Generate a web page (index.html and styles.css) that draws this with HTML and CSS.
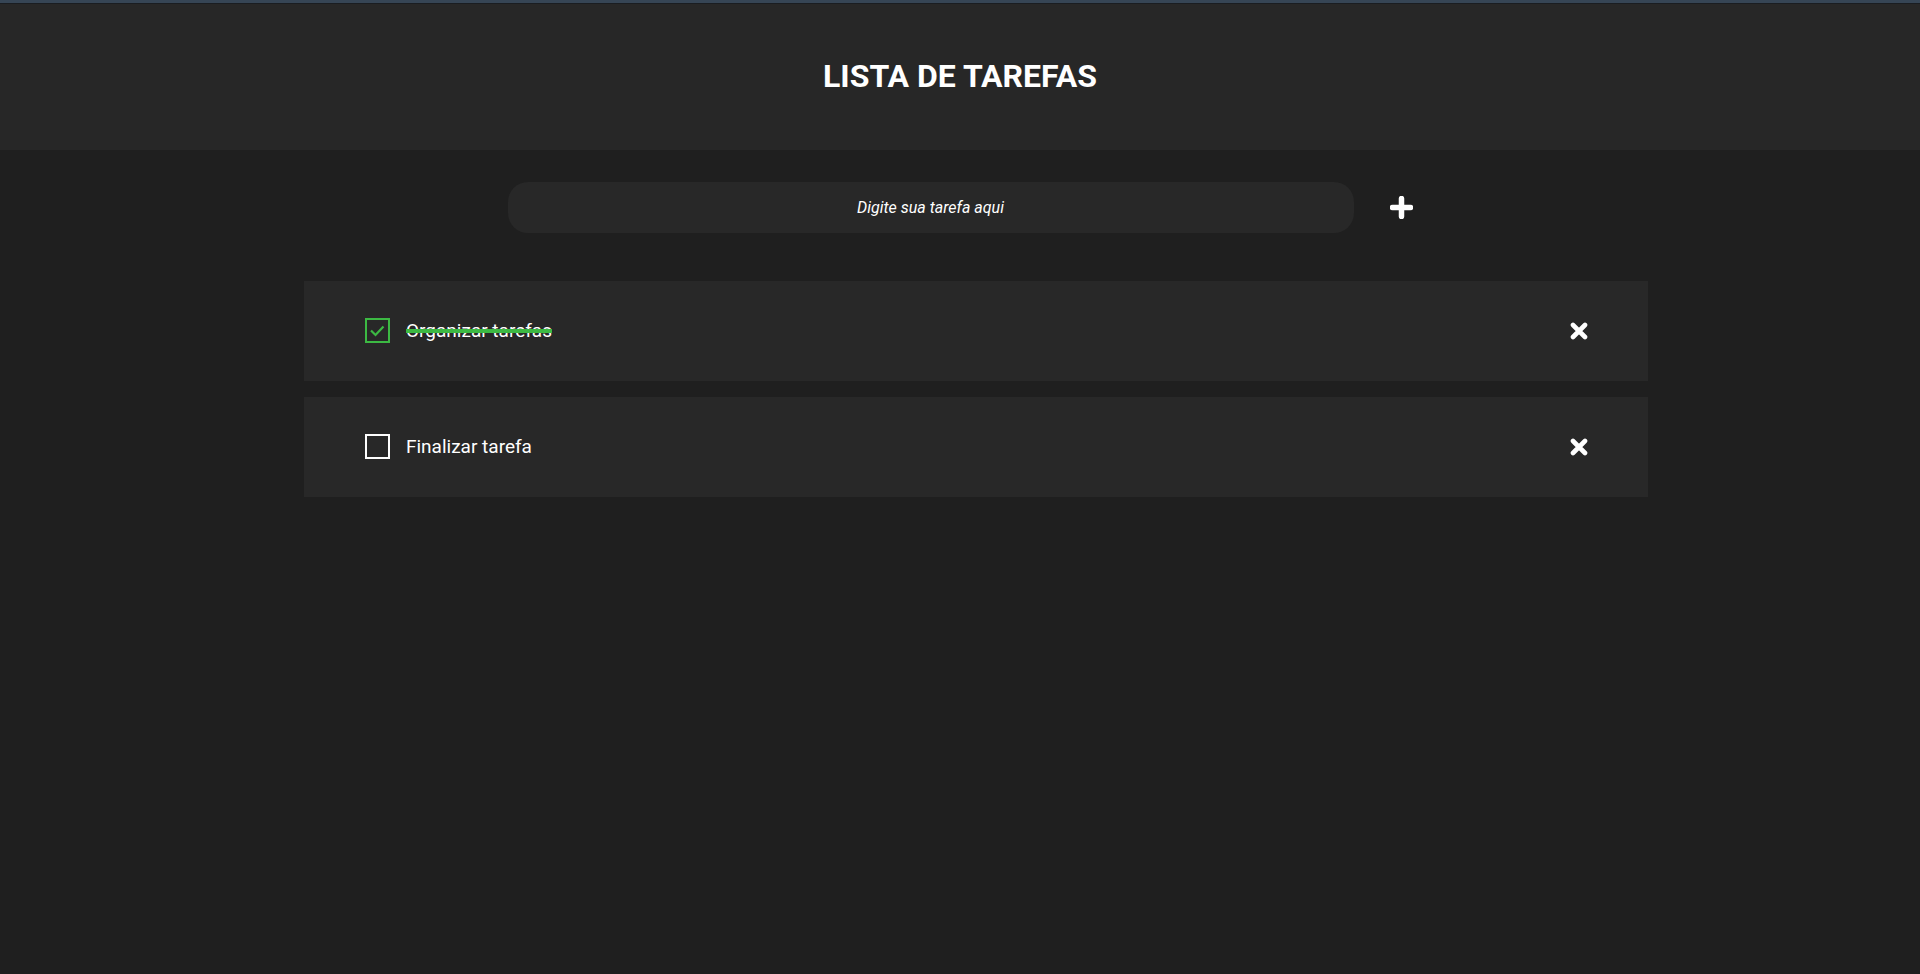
FILE: index.html
```html
<!DOCTYPE html>
<html lang="pt-BR">
<head>
<meta charset="utf-8">
<title>Lista de Tarefas</title>
<link rel="stylesheet" href="styles.css">
</head>
<body>
<div class="topstrip"></div>
<header class="header">
  <h1 class="title">LISTA DE TAREFAS</h1>
</header>
<main class="main">
  <form class="new-task">
    <input class="task-input" type="text" placeholder="Digite sua tarefa aqui">
    <button class="add-btn" type="button" aria-label="Adicionar">
      <svg width="23" height="23" viewBox="0 0 23 23"><path d="M11.5 2.5v18M2.5 11.5h18" stroke="#fff" stroke-width="5.5" stroke-linecap="round"/></svg>
    </button>
  </form>
  <ul class="task-list">
    <li class="task">
      <span class="check done">
        <svg width="21" height="21" viewBox="0 0 21 21"><path d="M4 10.5l4.5 4.5 8-8.5" fill="none" stroke="#3cb943" stroke-width="2.2"/></svg>
      </span>
      <span class="task-text done-text">Organizar tarefas</span>
      <button class="del-btn" type="button" aria-label="Remover">
        <svg width="18" height="18" viewBox="0 0 18 18"><path d="M3 3l12 12M15 3L3 15" stroke="#fff" stroke-width="4.6" stroke-linecap="round"/></svg>
      </button>
    </li>
    <li class="task">
      <span class="check"></span>
      <span class="task-text">Finalizar tarefa</span>
      <button class="del-btn" type="button" aria-label="Remover">
        <svg width="18" height="18" viewBox="0 0 18 18"><path d="M3 3l12 12M15 3L3 15" stroke="#fff" stroke-width="4.6" stroke-linecap="round"/></svg>
      </button>
    </li>
  </ul>
</main>
</body>
</html>
```

FILE: styles.css
```css
* { box-sizing: border-box; }
html, body { margin: 0; padding: 0; }
body {
  background: #1f1f1f;
  font-family: Roboto, "Liberation Sans", Arial, sans-serif;
  color: #fff;
  min-height: 974px;
}
.topstrip {
  height: 4px;
  background: #364555;
  border-bottom: 1px solid #1a1d21;
}
.header {
  height: 146px;
  background: #272727;
  display: flex;
  align-items: center;
  justify-content: center;
}
.title {
  margin: 0;
  font-size: 32px;
  font-weight: 700;
  line-height: 1;
  color: #fff;
  padding-bottom: 2px;
}
.main {
  display: flex;
  flex-direction: column;
  align-items: center;
  padding-top: 32px;
}
.new-task {
  display: flex;
  align-items: center;
  gap: 36px;
  margin: 0;
}
.task-input {
  width: 846px;
  height: 51px;
  border: none;
  outline: none;
  border-radius: 20px;
  background: #282828;
  color: #fff;
  font-family: Roboto, "Liberation Sans", Arial, sans-serif;
  font-size: 16px;
  font-style: italic;
  text-align: center;
}
.task-input::placeholder { color: #fff; opacity: 1; }
.add-btn, .del-btn {
  background: none;
  border: none;
  padding: 0;
  display: flex;
  cursor: pointer;
}
.task-list {
  list-style: none;
  margin: 48px 0 0 304px;
  align-self: flex-start;
  padding: 0;
  width: 1344px;
  display: flex;
  flex-direction: column;
  gap: 16px;
}
.task {
  height: 100px;
  background: #282828;
  display: flex;
  align-items: center;
  padding: 0 60px 1px 61px;
}
.check {
  width: 25px;
  height: 25px;
  border: 2px solid #fff;
  display: flex;
  align-items: center;
  justify-content: center;
  flex-shrink: 0;
}
.check.done { border-color: #3cb943; }
.task-text {
  margin-left: 16px;
  font-size: 19px;
  color: #fff;
  flex: 1;
  padding-bottom: 1px;
}
.done-text {
  text-decoration: line-through;
  text-decoration-color: #3cb943;
  text-decoration-thickness: 4px;
}
```
